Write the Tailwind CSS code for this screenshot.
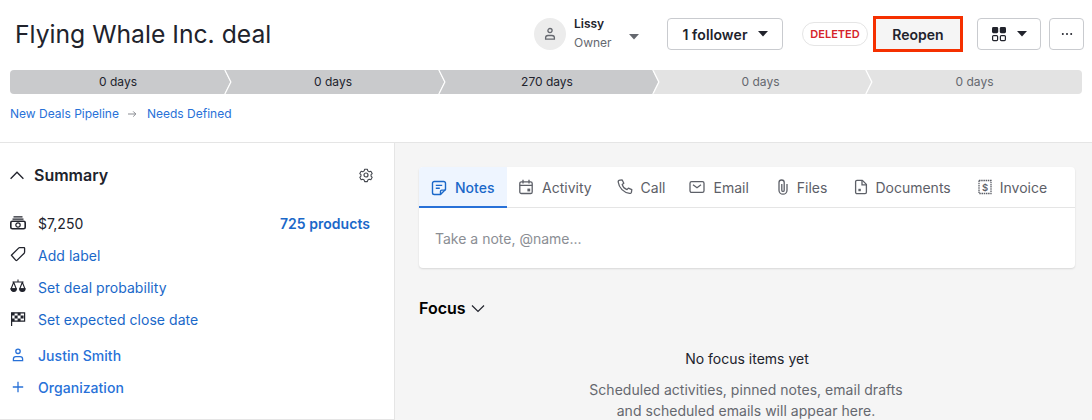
<!DOCTYPE html>
<html lang="en">
<head>
    <meta charset="UTF-8">
    <title>Flying Whale Inc. deal</title>
    <script src="https://cdn.jsdelivr.net/npm/@tailwindcss/browser@4"></script>
</head>
<body class="bg-white font-['Inter',sans-serif] text-[#21232c] w-[1092px] h-[420px] overflow-hidden">
    <!-- Header -->
    <div class="h-[70px] flex items-center pl-[15px] pr-2 pb-[2px]">
        <h1 class="text-[24.7px] leading-8 font-normal flex-1">Flying Whale Inc. deal</h1>
        <div class="flex items-center w-[133px]">
            <div class="w-8 h-8 rounded-full bg-[#ececec] flex items-center justify-center">
                <svg class="w-4 h-4 text-[#65686f]" viewBox="0 0 16 16" fill="none" stroke="currentColor" stroke-width="1.3"><circle cx="8" cy="4.6" r="2.1"/><path d="M3.6 13.2v-1.4c0-1.4 1.1-2.3 2.4-2.3h4c1.3 0 2.4.9 2.4 2.3v1.4z"/></svg>
            </div>
            <div class="ml-2 w-[55px]">
                <div class="text-[12px] leading-4 font-semibold -mt-[1px]">Lissy</div>
                <div class="text-[12px] leading-4 mt-[3px] text-[#65686f]">Owner</div>
            </div>
            <svg class="w-[10px] h-[6px] mt-[6px] text-[#65686f]" viewBox="0 0 10 6" fill="currentColor"><path d="M0 0h10L5 5.5z"/></svg>
        </div>
        <button class="w-[116px] h-8 border border-[#c9cbcf] rounded-[4px] flex items-center justify-center gap-[10px] text-[14px] font-semibold tracking-[0.1px]">
            1 follower
            <svg class="w-[10px] h-[6px]" viewBox="0 0 10 6" fill="currentColor"><path d="M0 0h10L5 5.5z"/></svg>
        </button>
        <span class="ml-[19px] w-[66px] h-[24px] rounded-full border border-[#e5e5e5] flex items-center justify-center text-[11px] font-semibold text-[#d5232a]">DELETED</span>
        <div class="ml-[5px] w-[90px] h-9 border-[3px] border-[#f53000] flex items-center justify-center bg-[#f5f5f5] text-[14px] font-semibold">Reopen</div>
        <button class="ml-[14px] w-[64px] h-8 border border-[#c9cbcf] rounded-[4px] flex items-center justify-center gap-[10px]">
            <svg class="w-4 h-4" viewBox="0 0 16 16" fill="#21232c"><rect x="1" y="1" width="6.2" height="6.2" rx="1.4"/><rect x="8.800" y="1" width="6.2" height="6.2" rx="1.4"/><rect x="1.600" y="9.600" width="5" height="5" rx="1" fill="none" stroke="#21232c" stroke-width="1.2"/><rect x="9.400" y="9.600" width="5" height="5" rx="1" fill="none" stroke="#21232c" stroke-width="1.2"/></svg>
            <svg class="w-[10px] h-[6px]" viewBox="0 0 10 6" fill="currentColor"><path d="M0 0h10L5 5.5z"/></svg>
        </button>
        <button class="ml-2 w-[35px] h-8 border border-[#c9cbcf] rounded-[4px] flex items-center justify-center">
            <svg class="w-4 h-4" viewBox="0 0 16 16" fill="#21232c"><circle cx="3.8" cy="8" r="1"/><circle cx="8" cy="8" r="1"/><circle cx="12.2" cy="8" r="1"/></svg>
        </button>
    </div>

    <!-- Stage bar -->
    <div class="mx-[10px] h-6 flex rounded-[4px] overflow-hidden text-[12px] leading-6 text-center">
        <div class="relative w-[216px] bg-[#c9cacc]">0 days
            <svg class="absolute right-[-6px] top-0 w-[8px] h-6 z-10" viewBox="0 0 8 24" fill="none"><path d="M0.7 0l6 12-6 12" stroke="#fff" stroke-width="1.5"/><path d="M0 0l6 12-6 12z" fill="#c9cacc"/></svg>
        </div>
        <div class="relative w-[214px] bg-[#c9cacc]">0 days
            <svg class="absolute right-[-6px] top-0 w-[8px] h-6 z-10" viewBox="0 0 8 24" fill="none"><path d="M0.7 0l6 12-6 12" stroke="#fff" stroke-width="1.5"/><path d="M0 0l6 12-6 12z" fill="#c9cacc"/></svg>
        </div>
        <div class="relative w-[214px] bg-[#c9cacc]">270 days
            <svg class="absolute right-[-6px] top-0 w-[8px] h-6 z-10" viewBox="0 0 8 24" fill="none"><path d="M0.7 0l6 12-6 12" stroke="#fff" stroke-width="1.5"/><path d="M0 0l6 12-6 12z" fill="#c9cacc"/></svg>
        </div>
        <div class="relative w-[213px] bg-[#e3e3e3] text-[#65686f]">0 days
            <svg class="absolute right-[-6px] top-0 w-[8px] h-6 z-10" viewBox="0 0 8 24" fill="none"><path d="M0.7 0l6 12-6 12" stroke="#fff" stroke-width="1.5"/><path d="M0 0l6 12-6 12z" fill="#e3e3e3"/></svg>
        </div>
        <div class="flex-1 bg-[#e3e3e3] text-[#65686f]">0 days</div>
    </div>

    <!-- Breadcrumb -->
    <div class="h-[49px] pl-[10px] pt-[12px] flex items-start gap-[7px] text-[12px] leading-[16px] text-[#2871d8] border-b border-[#e5e5e5]">
        <span>New Deals Pipeline</span>
        <svg class="w-3 h-3 mt-[2px] text-[#8a8d93]" viewBox="0 0 12 12" fill="none" stroke="currentColor" stroke-width="1"><path d="M2 6h8M7.2 3.4L9.8 6 7.2 8.6"/></svg>
        <span class="ml-[2px]">Needs Defined</span>
    </div>

    <div class="flex h-[277px]">
        <!-- Summary panel -->
        <div class="w-[395px] h-[277px] border-r border-b border-[#e5e5e5] pl-[10px] pr-[24px] pt-[20px] tracking-[0.04px]">
            <div class="flex items-center h-6">
                <svg class="w-[14px] h-[14px]" viewBox="0 0 14 14" fill="none" stroke="#21232c" stroke-width="1.3"><path d="M0.6 10.800L7 4.200 13.400 10.800"/></svg>
                <span class="ml-[10px] text-[16px] font-semibold flex-1 tracking-normal">Summary</span>
                <svg class="w-4 h-4 -mr-1 text-[#45484f]" viewBox="0 0 16 16" fill="none" stroke="currentColor" stroke-width="1.2"><path d="M6.500 1.600h3l.5 1.800 1.600.9 1.800-.5 1.500 2.600-1.300 1.300v1.600l1.300 1.300-1.500 2.600-1.800-.5-1.600.9-.5 1.800h-3l-.5-1.800-1.600-.9-1.800.5-1.500-2.600 1.300-1.300V7.700L1.100 6.400l1.500-2.600 1.800.5 1.600-.9z" stroke-linejoin="round" transform="translate(.8 .8) scale(.9)"/><circle cx="8" cy="8" r="2"/></svg>
            </div>
            <div class="mt-[20px] flex items-center h-8 text-[14px]">
                <svg class="w-4 h-4 mr-3" viewBox="0 0 16 16" fill="none" stroke="#21232c" stroke-width="1.2"><path d="M3.500 1.800h9M2.500 4.200h11" /><rect x="0.800" y="6.200" width="14.400" height="7.600" rx="1.600" stroke-width="1.600"/><circle cx="8" cy="10" r="2.200"/></svg>
                <span class="flex-1">$7,250</span>
                <span class="font-semibold text-[#1a68c9]">725 products</span>
            </div>
            <div class="flex items-center h-8 text-[14px] text-[#1a68c9]">
                <svg class="w-4 h-4 mr-3" viewBox="0 0 16 16" fill="none" stroke="#21232c" stroke-width="1.3"><path d="M1.400 9.800L8.600 2.600c.3-.3.7-.4 1-.4h4.400c.4 0 .6.2.6.6v3.800c0 .4-.1.800-.4 1.100l-7.300 7.200c-.3.3-.7.3-1 0z" stroke-linejoin="round" transform="translate(0 -1.500)"/></svg>
                Add label
            </div>
            <div class="flex items-center h-8 text-[14px] text-[#1a68c9]">
                <svg class="w-4 h-4 mr-3" viewBox="0 0 16 16" fill="#21232c" stroke="#21232c" stroke-width="1.100"><path d="M8 .6v2.200M2.500 3h11" fill="none"/><path d="M3.700 3.300L1 10h5.300zM12.300 3.300L9.700 10H15z" fill="none" stroke-linejoin="round"/><path d="M1 9.800h5.300a2.650 2.650 0 0 1-5.300 0zM9.700 9.800H15a2.650 2.650 0 0 1-5.300 0z"/></svg>
                Set deal probability
            </div>
            <div class="flex items-center h-8 text-[14px] text-[#1a68c9]">
                <svg class="w-4 h-4 mr-3" viewBox="0 0 16 16" fill="none" stroke="#21232c" stroke-width="1.200"><path d="M1.600 15V1.800h13v8.400h-13"/><path d="M1.600 1.800h3v2.800h-3zM7.600 1.800h3v2.800h-3zM4.600 4.600h3v2.800h-3zM10.600 4.600h3v2.800h-3zM7.600 7.400h3v2.800h-3zM1.600 7.400h3v2.800h-3z" fill="#21232c" stroke="none"/></svg>
                Set expected close date
            </div>
            <div class="mt-1 flex items-center h-8 text-[14px] font-medium text-[#2871d8]">
                <svg class="w-4 h-4 mr-3" viewBox="0 0 16 16" fill="none" stroke="currentColor" stroke-width="1.300"><circle cx="8" cy="4.300" r="2.200"/><path d="M3.400 13.600v-1.600c0-1.400 1.100-2.400 2.400-2.400h4.400c1.300 0 2.400 1 2.400 2.400v1.600z"/></svg>
                Justin Smith
            </div>
            <div class="flex items-center h-8 text-[14px] font-medium text-[#2871d8]">
                <svg class="w-4 h-4 mr-3" viewBox="0 0 16 16" fill="none" stroke="currentColor" stroke-width="1.300"><path d="M8 2.800v10.400M2.800 8h10.400"/></svg>
                Organization
            </div>
        </div>

        <!-- Main -->
        <div class="flex-1 bg-[#f5f5f5] pl-6 pr-[17px] pt-6">
            <div class="bg-white rounded-[4px] shadow-[0_1px_2px_rgba(0,0,0,0.12)] h-[101px]">
                <div class="flex h-[41px] border-b border-[#e5e5e5] text-[14px] text-[#5d6068]">
                    <div class="flex items-center gap-2 pl-3 pr-[12px] w-[88px] pt-[2px] -mb-[1px] bg-[#eef5ff] border-b-2 border-[#2871d8] text-[#1a68c9] font-medium rounded-tl-[4px]">
                        <svg class="w-4 h-4" viewBox="0 0 16 16" fill="none" stroke="currentColor" stroke-width="1.400"><path d="M14.500 9.500V3.300c0-1-.8-1.800-1.800-1.800H3.300c-1 0-1.800.8-1.800 1.800v9.400c0 1 .8 1.800 1.800 1.800h6.200z" stroke-linejoin="round"/><path d="M4.800 5.400h6.400M4.800 8.200h4M9.500 14.500v-3.200c0-.7.5-1.200 1.200-1.200h3.800"/></svg>
                        Notes
                    </div>
                    <div class="flex items-center gap-2 pl-[11px] pr-3">
                        <svg class="w-4 h-4" viewBox="0 0 16 16" fill="none" stroke="currentColor" stroke-width="1.300"><rect x="1.800" y="2.800" width="12.400" height="11.700" rx="1.600"/><path d="M5 .8v3.600M11 .8v3.600M1.800 6.400h12.400"/><rect x="9.400" y="9.600" width="2.800" height="2.800" fill="currentColor" stroke="none"/></svg>
                        Activity
                    </div>
                    <div class="flex items-center gap-2 pl-[13px] pr-3">
                        <svg class="w-4 h-4" viewBox="0 0 16 16" fill="none" stroke="currentColor" stroke-width="1.300"><path d="M3 1.200L5.200 1l1.600 3.200-1.600 1.400c.6 2.200 2.400 4.200 4.800 5l1.400-1.500 3.400 1.500-.4 2.800c-.2.8-1 1.200-1.800 1C6.600 13.600 2 9 1.200 3c-.1-1 .9-1.700 1.800-1.800z" stroke-linejoin="round"/></svg>
                        Call
                    </div>
                    <div class="flex items-center gap-2 pl-3 pr-3">
                        <svg class="w-4 h-4" viewBox="0 0 16 16" fill="none" stroke="currentColor" stroke-width="1.300"><rect x="1" y="2.600" width="14" height="10.800" rx="1.600"/><path d="M4 5.800l4 3 4-3"/></svg>
                        Email
                    </div>
                    <div class="flex items-center gap-[6px] pl-[14px] pr-3">
                        <svg class="w-4 h-4" viewBox="0 0 16 16" fill="none" stroke="currentColor" stroke-width="1.300"><path d="M12 5v6.200a4 4 0 0 1-8 0V3.600a2.600 2.600 0 0 1 5.200 0v7.600a1.200 1.200 0 0 1-2.400 0V5"/></svg>
                        Files
                    </div>
                    <div class="flex items-center gap-[6px] pl-[14px] pr-3">
                        <svg class="w-4 h-4" viewBox="0 0 16 16" fill="none" stroke="currentColor" stroke-width="1.300"><path d="M2.600 2.800c0-.8.6-1.400 1.400-1.400h5.400l4 4v7.800c0 .8-.6 1.400-1.400 1.400H4c-.8 0-1.400-.6-1.400-1.400z" stroke-linejoin="round"/><path d="M9 1.400v4.400h4.400"/><rect x="5.400" y="9.800" width="2.400" height="2.400" fill="currentColor" stroke="none"/></svg>
                        Documents
                    </div>
                    <div class="flex items-center gap-[7px] pl-[14px]">
                        <svg class="w-4 h-4" viewBox="0 0 16 16" fill="none" stroke="currentColor" stroke-width="1.300"><path d="M2 1.500h12v13H2z" stroke-dasharray="1.500 .7"/><text x="8" y="11.600" text-anchor="middle" font-size="9.500" font-weight="600" fill="currentColor" stroke="none" font-family="Inter">$</text></svg>
                        Invoice
                    </div>
                </div>
                <div class="pl-4 pt-[21px] text-[14px] leading-5 text-[#8b8e94]">Take a note, @name...</div>
            </div>
            <div class="mt-[30px] flex items-center gap-[5px] text-[#000]">
                <span class="text-[16px] leading-5 font-semibold">Focus</span>
                <svg class="w-[14px] h-[14px]" viewBox="0 0 14 14" fill="none" stroke="#21232c" stroke-width="1.200"><path d="M1 4.500L7 10.500 13 4.500"/></svg>
            </div>
            <div class="mt-[31px] text-center text-[14px] leading-5">No focus items yet</div>
            <div class="mt-[10px] text-center text-[14px] tracking-[0.03px] leading-[21px] text-[#65686f] -translate-x-[1px]">Scheduled activities, pinned notes, email drafts<br>and scheduled emails will appear here.</div>
        </div>
    </div>
</body>
</html>
